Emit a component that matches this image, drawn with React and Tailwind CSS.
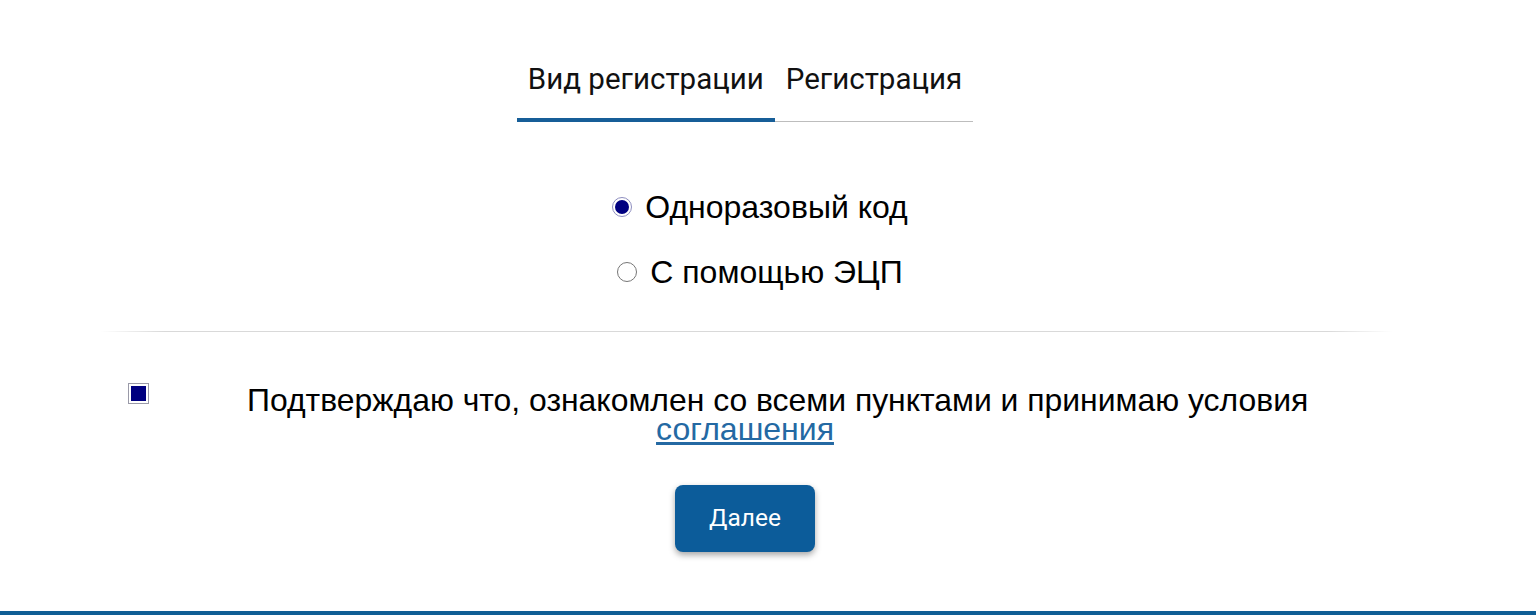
const Radio = ({ checked }) => (
  <span
    className={
      "inline-flex w-5 h-5 rounded-full border items-center justify-center bg-white shrink-0 " +
      (checked ? "border-[#8e8ebf] p-[2px]" : "border-[#767676]")
    }
  >
    {checked && <span className="block w-full h-full rounded-full bg-[#000080]" />}
  </span>
);

const App = () => {
  return (
    <div className="h-[615px] flex flex-col overflow-hidden bg-white text-black font-['Liberation_Sans',Arial,sans-serif]">
      <div className="w-[1490px]">
        {/* Tabs */}
        <div className="pt-[63px] flex justify-center font-['Roboto',sans-serif] text-[29.5px] leading-[32px] text-[#111]">
          <div className="px-[11px] pb-[23px] border-b-4 border-[#175e98]">Вид регистрации</div>
          <div className="px-[11px] pb-[26px] border-b border-[#bdbdbd]">Регистрация</div>
        </div>

        {/* Registration type */}
        <div className="mt-[69px] pl-[30px] flex flex-col items-center gap-[33px] text-[32px] leading-[32px]">
          <label className="flex items-center">
            <Radio checked />
            <span className="ml-[13px]">Одноразовый код</span>
          </label>
          <label className="flex items-center">
            <Radio />
            <span className="ml-[13px]">С помощью ЭЦП</span>
          </label>
        </div>

        <div className="mt-[43px] ml-[100px] w-[1292px] h-px bg-[linear-gradient(to_right,transparent,#d9d9d9_5%,#d9d9d9_95%,transparent)]" />

        {/* Agreement */}
        <div className="mt-[51px] flex items-start">
          <span className="ml-[128px] w-[21px] h-[21px] border border-[#9a9aa8] bg-white p-[2px] shrink-0">
            <span className="block w-full h-full bg-[#000080]" />
          </span>
          <p className="mt-[3px] ml-[98px] whitespace-nowrap text-[31.9px] leading-[29px]">
            Подтверждаю что, ознакомлен со всеми пунктами и принимаю условия
          </p>
        </div>
        <div className="text-center text-[32px] leading-[29px]">
          <a href="#" className="text-[#2469a3] underline underline-offset-[2px]">
            соглашения
          </a>
        </div>

        <div className="mt-[41px] flex justify-center">
          <button className="w-[140px] h-[67px] rounded-lg bg-[#0c5c9a] text-white font-['Roboto',sans-serif] text-[24.5px] shadow-[0_3px_6px_rgba(0,0,0,0.35)]">
            Далее
          </button>
        </div>
      </div>

      <div className="mt-auto h-[4px] bg-[#0f5e95] shrink-0" />
    </div>
  );
};

export default App;
